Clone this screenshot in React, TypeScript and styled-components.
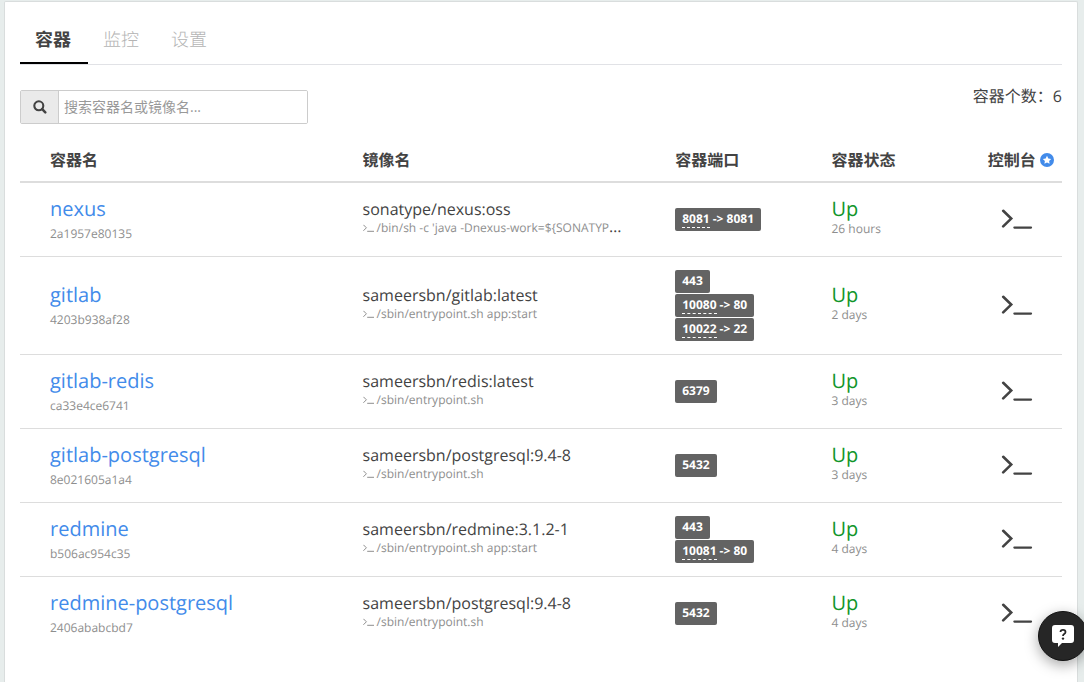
import React from "react";
import styled, { createGlobalStyle } from "styled-components";

const GlobalStyle = createGlobalStyle`
  *, *::before, *::after { box-sizing: border-box; }
  html, body { margin: 0; }
  body {
    background: #e7edec;
    color: #434343;
    font-family: "Open Sans", "Noto Sans CJK SC", sans-serif;
    font-size: 16px;
    line-height: 24px;
    text-rendering: geometricPrecision;
  }
`;

const Page = styled.div`
  min-height: 100vh;
  display: flex;
  padding: 1px 6px 0 4px;
`;

const Panel = styled.main`
  flex: 1;
  min-width: 0;
  padding: 12px 15px 40px;
  background: #fff;
  border: 1px solid #d9dddd;
  border-bottom: 0;
  border-radius: 2px 2px 0 0;
`;

const Tabs = styled.nav`
  display: flex;
  border-bottom: 1px solid #e1e2e6;
`;

const Tab = styled.a<{ $active?: boolean }>`
  padding: 14px 17px 10px 15px;
  border-bottom: 2px solid ${(p) => (p.$active ? "#000" : "transparent")};
  color: ${(p) => (p.$active ? "#434343" : "#b4b4b4")};
  font-size: 18px;
  font-weight: ${(p) => (p.$active ? 700 : 300)};
  line-height: 24px;
  text-decoration: none;
`;

const Toolbar = styled.div`
  display: flex;
  justify-content: space-between;
  align-items: flex-start;
  padding-top: 25px;
`;

const Search = styled.label`
  display: flex;
  width: 288px;
  height: 34px;
  border: 1px solid #ccc;
  border-radius: 2px;
  overflow: hidden;
`;

const SearchAddon = styled.span`
  display: flex;
  align-items: center;
  justify-content: center;
  width: 38px;
  background: #eaeaea;
  border-right: 1px solid #ccc;
`;

const SearchInput = styled.input`
  flex: 1;
  min-width: 0;
  padding: 0 5px;
  border: 0;
  outline: 0;
  color: #434343;
  font: inherit;
  font-size: 14px;
  &::placeholder { color: #999; opacity: 1; }
`;

const Count = styled.div`
  line-height: 12px;
`;

const Table = styled.table`
  width: 100%;
  margin-top: 14px;
  table-layout: fixed;
  border-collapse: separate;
  border-spacing: 0;
`;

const HeadCell = styled.th<{ $width: string }>`
  width: ${(p) => p.$width};
  padding: 10px 0 9px 30px;
  border-bottom: 2px solid #ddd;
  text-align: left;
  font-weight: 700;
  line-height: 24px;
  white-space: nowrap;
`;

const HelpButton = styled.button`
  width: 14px;
  height: 14px;
  margin-left: 4px;
  padding: 0;
  border: 0;
  background: none;
  vertical-align: -1px;
  svg { display: block; }
`;

const Row = styled.tr`
  height: 74px;
  > td { border-bottom: 1px solid #ddd; }
  &:last-child > td { border-bottom-color: transparent; }
`;

const Cell = styled.td`
  padding: 12px 0 12px 30px;
  vertical-align: middle;
`;

const Name = styled.a`
  display: block;
  margin-bottom: 1px;
  color: #428bea;
  font-size: 20px;
  line-height: 28px;
  text-decoration: none;
`;

const Small = styled.div`
  color: #8e8e8e;
  font-size: 12px;
  line-height: 20px;
`;

const Image = styled.div`
  padding-bottom: 4px;
  line-height: 18px;
`;

const Command = styled.div`
  max-width: 264px;
  overflow: hidden;
  text-overflow: ellipsis;
  white-space: nowrap;
  line-height: 16px;
`;

const CommandText = styled.span`
  color: #8e8e8e;
  font-size: 12px;
`;

const Ports = styled.div`
  display: flex;
  flex-direction: column;
  align-items: flex-start;
  gap: 1px;
  padding: 1px 0;
`;

const Port = styled.span`
  height: 23px;
  padding: 3px 7px;
  border-radius: 2px;
  background: #636363;
  color: #fff;
  font-size: 12px;
  font-weight: 700;
  line-height: 16px;
  white-space: nowrap;
`;

const PublicPort = styled.a`
  display: inline-block;
  border-bottom: 1px dashed #fff;
  color: inherit;
  line-height: 16px;
  text-decoration: none;
`;

const Status = styled.div`
  padding-bottom: 6px;
`;

const Up = styled.div`
  color: #11952a;
  font-size: 20px;
  line-height: 24px;
`;

const Age = styled.div`
  color: #8e8e8e;
  font-size: 12px;
  line-height: 16px;
`;

const ConsoleButton = styled.button`
  display: block;
  margin: 0 0 2px 13px;
  padding: 0;
  border: 0;
  background: none;
  svg { display: block; }
`;

const ChatButton = styled.button`
  position: fixed;
  right: -4px;
  bottom: 21px;
  display: flex;
  align-items: center;
  justify-content: center;
  width: 50px;
  height: 50px;
  padding: 0;
  border: 1px solid #111;
  border-radius: 50%;
  background: #262626;
  box-shadow: 0 4px 14px rgba(0, 0, 0, 0.35);
`;

type PortMap = { host?: string; inner: string };
type Container = {
  name: string;
  id: string;
  image: string;
  command: string;
  ports: PortMap[];
  age: string;
};

const containers: Container[] = [
  {
    name: "nexus",
    id: "2a1957e80135",
    image: "sonatype/nexus:oss",
    command: "/bin/sh -c 'java -Dnexus-work=${SONATYPE_WORK}'",
    ports: [{ host: "8081", inner: "8081" }],
    age: "26 hours",
  },
  {
    name: "gitlab",
    id: "4203b938af28",
    image: "sameersbn/gitlab:latest",
    command: "/sbin/entrypoint.sh app:start",
    ports: [{ inner: "443" }, { host: "10080", inner: "80" }, { host: "10022", inner: "22" }],
    age: "2 days",
  },
  {
    name: "gitlab-redis",
    id: "ca33e4ce6741",
    image: "sameersbn/redis:latest",
    command: "/sbin/entrypoint.sh",
    ports: [{ inner: "6379" }],
    age: "3 days",
  },
  {
    name: "gitlab-postgresql",
    id: "8e021605a1a4",
    image: "sameersbn/postgresql:9.4-8",
    command: "/sbin/entrypoint.sh",
    ports: [{ inner: "5432" }],
    age: "3 days",
  },
  {
    name: "redmine",
    id: "b506ac954c35",
    image: "sameersbn/redmine:3.1.2-1",
    command: "/sbin/entrypoint.sh app:start",
    ports: [{ inner: "443" }, { host: "10081", inner: "80" }],
    age: "4 days",
  },
  {
    name: "redmine-postgresql",
    id: "2406ababcbd7",
    image: "sameersbn/postgresql:9.4-8",
    command: "/sbin/entrypoint.sh",
    ports: [{ inner: "5432" }],
    age: "4 days",
  },
];

const SearchIcon = () => (
  <svg width="14" height="14" viewBox="0 0 14 14" fill="none" stroke="#434343" aria-hidden="true">
    <circle cx="5.8" cy="5.8" r="4.5" strokeWidth="2.1" />
    <path d="M9.2 9.2 12.3 12.3" strokeWidth="2.5" strokeLinecap="round" />
  </svg>
);

const StarIcon = () => (
  <svg width="14" height="14" viewBox="0 0 14 14" aria-hidden="true">
    <circle cx="7" cy="7" r="7" fill="#428bea" />
    <path
      d="M7 2.8 8.3 5.5 11.2 5.9 9.1 7.9 9.6 10.8 7 9.4 4.4 10.8 4.9 7.9 2.8 5.9 5.7 5.5Z"
      fill="#fff"
    />
  </svg>
);

const PromptIcon = () => (
  <svg width="32" height="20" viewBox="0 0 32 20" fill="none" stroke="#434343" strokeLinecap="round" aria-hidden="true">
    <path d="M2.2 1.8 10.2 9.6 2.2 17.4" strokeWidth="2.6" />
    <path d="M13.4 18.6H30" strokeWidth="2.3" />
  </svg>
);

const SmallPromptIcon = () => (
  <svg width="14" height="8" viewBox="0 0 14 8" fill="none" stroke="#8e8e8e" aria-hidden="true">
    <path d="M0.4 0.8 3.4 3.8 0.4 6.8" />
    <path d="M4.2 7.3H11" />
  </svg>
);

const ChatIcon = () => (
  <svg width="24" height="24" viewBox="0 0 24 24" aria-hidden="true">
    <path
      d="M4 1H20Q23 1 23 4V16Q23 19 20 19H11L7 23V19H4Q1 19 1 16V4Q1 1 4 1Z"
      fill="#fff"
    />
    <path
      d="M9.5 8Q9.5 5.9 12 5.9T14.5 8Q14.5 9.1 13.2 10T12 12"
      fill="none"
      stroke="#262626"
      strokeWidth="1.8"
    />
    <circle cx="12" cy="14.6" r="1.2" fill="#262626" />
  </svg>
);

export default function App() {
  return (
    <>
      <GlobalStyle />
      <Page>
        <Panel>
          <Tabs>
            <Tab href="#containers" $active aria-current="page">容器</Tab>
            <Tab href="#monitor">监控</Tab>
            <Tab href="#settings">设置</Tab>
          </Tabs>
          <Toolbar>
            <Search>
              <SearchAddon><SearchIcon /></SearchAddon>
              <SearchInput type="text" placeholder="搜索容器名或镜像名..." />
            </Search>
            <Count>容器个数：6</Count>
          </Toolbar>
          <Table>
            <thead>
              <tr>
                <HeadCell $width="30%">容器名</HeadCell>
                <HeadCell $width="30%">镜像名</HeadCell>
                <HeadCell $width="15%">容器端口</HeadCell>
                <HeadCell $width="15%">容器状态</HeadCell>
                <HeadCell $width="10%">
                  控制台
                  <HelpButton type="button" aria-label="控制台"><StarIcon /></HelpButton>
                </HeadCell>
              </tr>
            </thead>
            <tbody>
              {containers.map((c) => (
                <Row key={c.id}>
                  <Cell>
                    <Name href={`#${c.name}`}>{c.name}</Name>
                    <Small>{c.id}</Small>
                  </Cell>
                  <Cell>
                    <Image>
                      {c.image}
                      <Command>
                        <CommandText><SmallPromptIcon />{c.command}</CommandText>
                      </Command>
                    </Image>
                  </Cell>
                  <Cell>
                    <Ports>
                      {c.ports.map((p) => (
                        <Port key={p.inner}>
                          {p.host && <><PublicPort href={`#port-${p.host}`}>{p.host}</PublicPort>{" -> "}</>}
                          {p.inner}
                        </Port>
                      ))}
                    </Ports>
                  </Cell>
                  <Cell>
                    <Status>
                      <Up>Up</Up>
                      <Age>{c.age}</Age>
                    </Status>
                  </Cell>
                  <Cell>
                    <ConsoleButton type="button" aria-label={`控制台 ${c.name}`}>
                      <PromptIcon />
                    </ConsoleButton>
                  </Cell>
                </Row>
              ))}
            </tbody>
          </Table>
        </Panel>
      </Page>
      <ChatButton type="button" aria-label="帮助"><ChatIcon /></ChatButton>
    </>
  );
}
